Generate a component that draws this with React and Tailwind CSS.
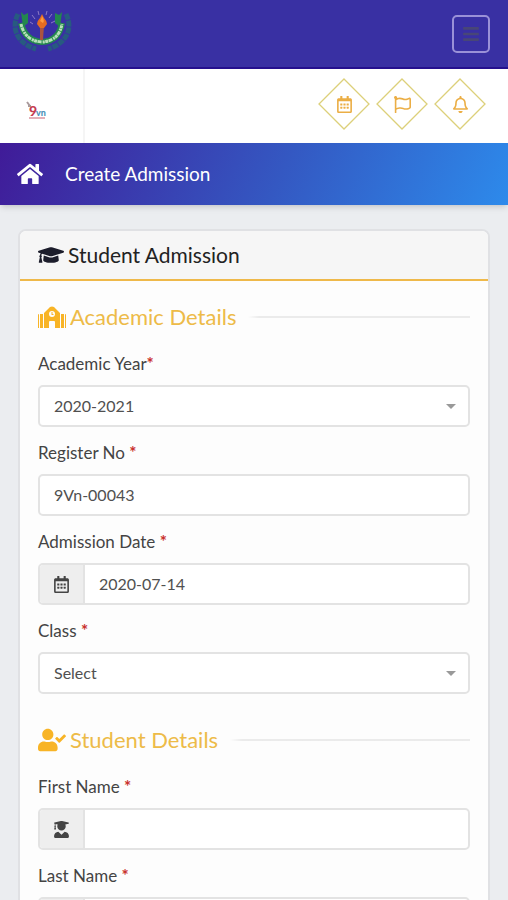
import React from "react";
import {
  FaBars,
  FaGraduationCap,
  FaHome,
  FaRegBell,
  FaRegCalendarAlt,
  FaRegFlag,
  FaUserCheck,
  FaUserGraduate,
} from "react-icons/fa";

function CrestLogo() {
  return (
    <svg viewBox="0 0 60 54" className="h-[54px] w-[60px]" aria-hidden="true">
      <g fill="none" stroke="#275a80" strokeWidth="5">
        <path d="M6 10C-2 26 7 40 24 45" strokeDasharray="6 1" />
        <path d="M54 10C62 26 53 40 36 45" strokeDasharray="6 1" />
      </g>
      <path d="M9 8l3 3 4-2v10l-5 4z" fill="#23884d" />
      <path d="M50 8l-3 3-4-2v10l5 4z" fill="#23884d" />
      <path d="M9 19Q13 37 30 38Q47 37 50 19" fill="none" stroke="#23884d" strokeWidth="6" />
      <path
        d="M9 20Q13 37 30 38Q47 37 50 20"
        fill="none"
        stroke="#b7dfb9"
        strokeWidth="3"
        strokeDasharray="3 .5 4 1 2 .5"
      />
      <path d="M28 21h4l-1 15h-3z" fill="#a95440" />
      <path d="M25 20q0-3 3-6l2-4 2 4q3 3 3 6l-3 4h-4z" fill="#e56c20" />
      <path d="M28 17q2-3 2-5 3 5 1 7z" fill="#ff9a3d" />
      <path
        d="M18 18l3 2M20 11l3 4M26 7l1 4M35 7l-1 4M40 10l-3 4M43 17l-4 2"
        stroke="#8d7bc5"
        strokeWidth="1"
      />
    </svg>
  );
}

function BrandMark() {
  return (
    <svg viewBox="0 0 22 18" className="h-[18px] w-[22px]" role="img" aria-label="9vn">
      <path d="M1 1l3 4M2 5h3" stroke="#a99a9c" strokeWidth="2" />
      <text x="3" y="15" fontFamily="Lato, sans-serif" fontSize="14" fontWeight="900" fill="#c53c50">
        9
      </text>
      <text x="10" y="15" fontFamily="Lato, sans-serif" fontSize="9" fontWeight="900" fill="#4c91b8">
        vn
      </text>
      <path d="M3 17h16" stroke="#c86070" strokeWidth="1" />
    </svg>
  );
}

function SchoolIcon() {
  return (
    <svg viewBox="0 0 28 24" className="h-6 w-7 shrink-0" fill="currentColor" aria-hidden="true">
      <path d="M0 10q0-1 1-1h0v14H0zM2 9h3v14H2zM23 9h3v14h-3zM27 9q1 0 1 1v13h-1z" />
      <path
        fillRule="evenodd"
        d="M6 8l6-6q2-1 4 0l6 6v15h-5v-6q0-1-1-1h-4q-1 0-1 1v6H6zM14 6a3 3 0 1 0 0 6 3 3 0 1 0 0-6z"
      />
      <path d="M13.500 7h1v2h1v1h-2z" />
    </svg>
  );
}

function DiamondButton({ label, icon: Icon }) {
  return (
    <button type="button" aria-label={label} className="grid h-[52px] w-[52px] place-items-center">
      <svg viewBox="0 0 52 52" className="col-start-1 row-start-1 h-[52px] w-[52px]" aria-hidden="true">
        <path d="M26 1L51 26 26 51 1 26z" fill="none" stroke="#dcd07a" strokeWidth="1.300" />
      </svg>
      <Icon className="col-start-1 row-start-1 h-[17px] w-[17px] text-[#ebae45]" />
    </button>
  );
}

function SectionTitle({ icon, children }) {
  return (
    <h3 className="mb-[23px] flex h-6 items-center text-[22px] leading-6 text-[#edbb48]">
      <span className="mr-1 flex w-7 shrink-0 text-[#f8b426]">{icon}</span>
      {children}
      <span className="ml-3 h-0.5 flex-1 bg-linear-to-r from-transparent via-[#ebebeb] via-5% to-[#ebebeb]" />
    </h3>
  );
}

function Label({ id, tight, children }) {
  return (
    <label htmlFor={id} className="mb-[9px] block text-[17px] leading-6 text-[#444]">
      {children}
      {tight ? "" : " "}
      <span className="font-bold text-[#c9302c]">*</span>
    </label>
  );
}

function SelectField({ id, label, value, tight }) {
  return (
    <div className="mb-3.5">
      <Label id={id} tight={tight}>{label}</Label>
      <div className="grid items-center">
        <select
          id={id}
          className="col-start-1 row-start-1 h-[42px] w-full appearance-none rounded-[5px] border-2 border-[#e3e3e3] bg-white px-3.5 text-[16px] text-[#505050]"
        >
          <option>{value}</option>
        </select>
        <span className="pointer-events-none col-start-1 row-start-1 mr-3.5 justify-self-end border-x-5 border-t-5 border-x-transparent border-t-[#999]" />
      </div>
    </div>
  );
}

function InputField({ id, label, value, icon: Icon }) {
  return (
    <div className="mb-3.5">
      <Label id={id}>{label}</Label>
      <div className="flex h-[42px] overflow-hidden rounded-[5px] border-2 border-[#e3e3e3] bg-white">
        {Icon && (
          <span className="flex w-[45px] shrink-0 items-center justify-center border-r-2 border-[#e3e3e3] bg-[#eee]">
            <Icon className="h-[17px] w-[17px] text-[#444]" />
          </span>
        )}
        <input
          id={id}
          type="text"
          defaultValue={value}
          className="min-w-0 flex-1 bg-transparent px-3.5 text-[16px] text-[#505050] outline-none"
        />
      </div>
    </div>
  );
}

export default function App() {
  return (
    <div className="min-h-screen bg-[#ebedf0] font-['Lato',sans-serif]">
      <header className="flex h-[69px] items-center justify-between border-b-2 border-[#25108e] bg-[#3930a3] pr-[18px] pl-3">
        <div className="self-start pt-1">
          <CrestLogo />
        </div>
        <button
          type="button"
          aria-label="Menu"
          className="flex h-[38px] w-[38px] items-center justify-center rounded-[5px] border-2 border-[#9a91d8]"
        >
          <FaBars className="h-[18px] w-4 text-[#484677]" />
        </button>
      </header>

      <div className="flex h-[74px] items-center justify-between bg-white pr-[22px]">
        <div className="flex h-full w-[85px] items-center border-r-2 border-[#f5f5f5] pt-2 pl-[26px]">
          <BrandMark />
        </div>
        <nav className="flex gap-1.5 pb-1">
          <DiamondButton label="Calendar" icon={FaRegCalendarAlt} />
          <DiamondButton label="Flag" icon={FaRegFlag} />
          <DiamondButton label="Notifications" icon={FaRegBell} />
        </nav>
      </div>

      <div className="flex h-[62px] items-center bg-linear-[115deg,#401b98,#3458c2_55%,#2d8aeb] pl-[17px] text-white shadow-md">
        <FaHome className="mr-[22px] h-[26px] w-[26px]" />
        <h1 className="text-[19px] leading-6">Create Admission</h1>
      </div>

      <main className="px-[18px] pt-6 pb-6">
        <section className="overflow-hidden rounded-lg border-2 border-[#e0e1e4] bg-[#fdfdfd]">
          <header className="flex h-[50px] items-center border-b-2 border-[#efb94a] bg-[#f6f6f6] px-[18px]">
            <FaGraduationCap className="mr-1 h-[26px] w-[26px] text-[#1c1d2b]" />
            <h2 className="text-[21px] leading-6 text-[#222]">Student Admission</h2>
          </header>
          <form className="px-[18px] pt-6 pb-2">
            <SectionTitle icon={<SchoolIcon />}>Academic Details</SectionTitle>
            <SelectField id="year" label="Academic Year" value="2020-2021" tight />
            <InputField id="register" label="Register No" value="9Vn-00043" />
            <InputField id="date" label="Admission Date" value="2020-07-14" icon={FaRegCalendarAlt} />
            <SelectField id="class" label="Class" value="Select" />
            <div className="pt-5">
              <SectionTitle icon={<FaUserCheck className="h-7 w-7" />}>Student Details</SectionTitle>
              <InputField id="first" label="First Name" value="" icon={FaUserGraduate} />
              <InputField id="last" label="Last Name" value="" icon={FaUserGraduate} />
            </div>
          </form>
        </section>
      </main>
    </div>
  );
}
